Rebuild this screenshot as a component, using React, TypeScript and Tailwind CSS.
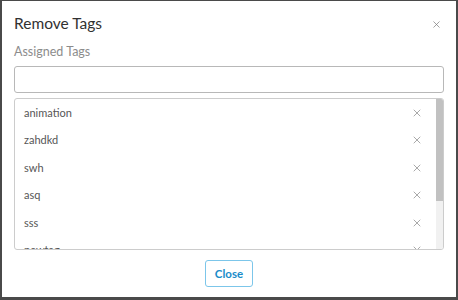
import { X } from "lucide-react";

const tags = ["animation", "zahdkd", "swh", "asq", "sss", "newtag", "other"];

export default function App() {
  return (
    <div
      className="w-[458px] h-[300px] bg-white border-x-2 border-b-[3px] border-t border-[#4a4a4a] flex flex-col"
      style={{ fontFamily: "Lato, 'Liberation Sans', sans-serif" }}
    >
      <div className="flex items-center justify-between pl-[12px] pr-[14px] pt-[12px] h-[34px]">
        <h2 className="text-[15.5px] text-[#313131] leading-none">Remove Tags</h2>
        <X className="w-[11px] h-[11px] text-[#777]" strokeWidth={1.5} />
      </div>
      <div className="px-[12px] flex flex-col">
        <label className="mt-[10px] text-[12.5px] leading-[14px] text-[#8c8c8c]">Assigned Tags</label>
        <div className="mt-[7px] h-[27px] rounded-[3px] border border-[#b8b8b8]" />
        <div className="mt-[5px] h-[152px] rounded-[3px] border border-[#cccccc] flex overflow-hidden">
          <ul className="flex-1 overflow-hidden">
            {tags.map((t) => (
              <li key={t} className="h-[27.5px] flex items-center justify-between pl-[9px] pr-[13px]">
                <span className="text-[11px] text-[#565656]">{t}</span>
                <X className="w-[12px] h-[12px] text-[#7a7a7a]" strokeWidth={1.3} />
              </li>
            ))}
          </ul>
          <div className="w-[7px] bg-[#f1f1f1] flex flex-col">
            <div className="h-[102px] bg-[#c1c1c1]" />
          </div>
        </div>
      </div>
      <div className="flex justify-center mt-[10px]">
        <button className="w-[48px] h-[27px] rounded-[3px] border border-[#7cc6ea] text-[#1a8cc9] text-[11.5px] font-bold">
          Close
        </button>
      </div>
    </div>
  );
}
